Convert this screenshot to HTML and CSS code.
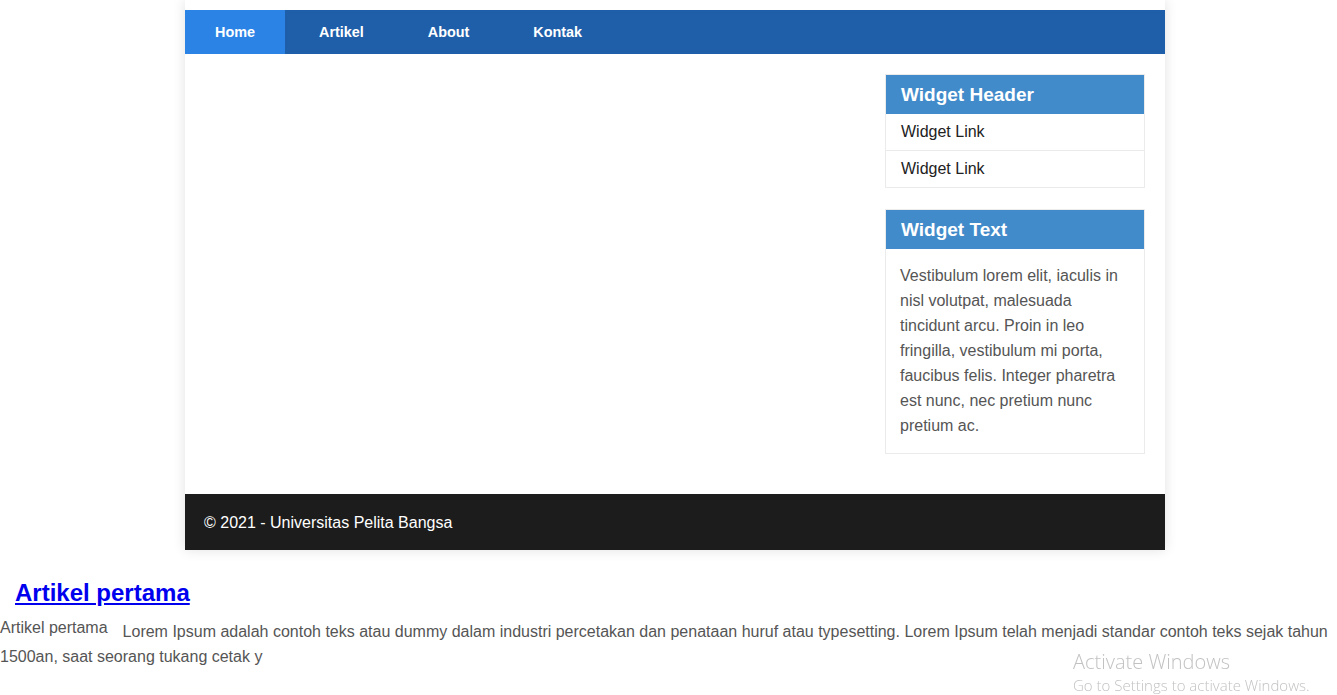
FILE: index.html
```html
<!DOCTYPE html>
<html lang="id">
<head>
<meta charset="utf-8">
<title>Universitas Pelita Bangsa</title>
<link rel="stylesheet" href="styles.css">
</head>
<body>
<div class="container">
  <nav class="nav">
    <a class="nav-item active" href="#">Home</a>
    <a class="nav-item" href="#">Artikel</a>
    <a class="nav-item" href="#">About</a>
    <a class="nav-item" href="#">Kontak</a>
  </nav>
  <div class="main">
    <section class="content"></section>
    <aside class="sidebar">
      <div class="widget">
        <h3 class="widget-title">Widget Header</h3>
        <ul class="widget-list">
          <li><a href="#">Widget Link</a></li>
          <li><a href="#">Widget Link</a></li>
        </ul>
      </div>
      <div class="widget">
        <h3 class="widget-title">Widget Text</h3>
        <p class="widget-text">Vestibulum lorem elit, iaculis in nisl volutpat, malesuada tincidunt arcu. Proin in leo fringilla, vestibulum mi porta, faucibus felis. Integer pharetra est nunc, nec pretium nunc pretium ac.</p>
      </div>
    </aside>
  </div>
  <footer class="footer">&copy; 2021 - Universitas Pelita Bangsa</footer>
</div>
<article class="article">
  <h2 class="article-title"><a href="#">Artikel pertama</a></h2>
  <span class="article-label">Artikel pertama</span>
  <p class="article-body">Lorem Ipsum adalah contoh teks atau dummy dalam industri percetakan dan penataan huruf atau typesetting. Lorem Ipsum telah menjadi standar contoh teks sejak tahun 1500an, saat seorang tukang cetak y</p>
</article>
<div class="activate">
  <div class="activate-title">Activate Windows</div>
  <div class="activate-sub">Go to Settings to activate Windows.</div>
</div>
</body>
</html>
```
FILE: styles.css
```css
* { box-sizing: border-box; }
html, body { margin: 0; padding: 0; background: #fff; }
body { font-family: "Liberation Sans", Arial, sans-serif; color: #555; }

.container {
  width: 980px;
  margin-left: 185px;
  padding-top: 10px;
  background: #fff;
  box-shadow: 0 0 12px rgba(0,0,0,0.12);
}

.nav {
  display: flex;
  gap: 4px;
  height: 44px;
  background: #1f5fa9;
}
.nav-item {
  display: flex;
  align-items: center;
  padding: 0 30px;
  color: #fff;
  font-size: 14.4px;
  font-weight: bold;
  text-decoration: none;
}
.nav-item.active { background: #2b83e6; }

.main {
  display: flex;
  justify-content: space-between;
  padding: 20px 20px 40px 20px;
}
.content { flex: 1; }
.sidebar { width: 260px; display: flex; flex-direction: column; gap: 21px; }

.widget { border: 1px solid #ebebeb; }
.widget-title {
  margin: 0;
  height: 39px;
  display: flex;
  align-items: center;
  padding: 0 15px;
  background: #428bca;
  color: #fff;
  font-size: 19px;
  font-weight: bold;
}
.widget-list { list-style: none; margin: 0; padding: 0; }
.widget-list li { border-top: 1px solid #ebebeb; }
.widget-list li:first-child { border-top: none; }
.widget-list a {
  display: flex;
  align-items: center;
  height: 36px;
  padding: 0 15px;
  color: #222;
  font-size: 16px;
  text-decoration: none;
}
.widget-text {
  margin: 0;
  padding: 14px 14px 15px 14px;
  font-size: 16px;
  line-height: 25px;
  color: #555;
}

.footer {
  height: 56px;
  display: flex;
  align-items: center;
  padding: 2px 19px 0 19px;
  background: #1c1c1c;
  color: #fff;
  font-size: 16px;
}

.article { padding-top: 29px; }
.article-title {
  margin: 0 0 0 15px;
  font-size: 24px;
  line-height: 28px;
}
.article-title a { color: #0000ee; }
.article-label {
  float: left;
  margin: 12px 15px 0 0;
  font-size: 16px;
  line-height: 18px;
}
.article-body {
  margin: 12px 0 0 0;
  font-size: 16px;
  line-height: 25px;
  color: #555;
}

.activate {
  position: fixed;
  left: 1073px;
  top: 649px;
  color: #c2c2c2;
  font-family: "Open Sans", "Liberation Sans", sans-serif;
}
.activate-title { font-size: 20px; font-weight: 300; line-height: 26px; }
.activate-sub { font-size: 15px; line-height: 20px; font-weight: 300; }
```
